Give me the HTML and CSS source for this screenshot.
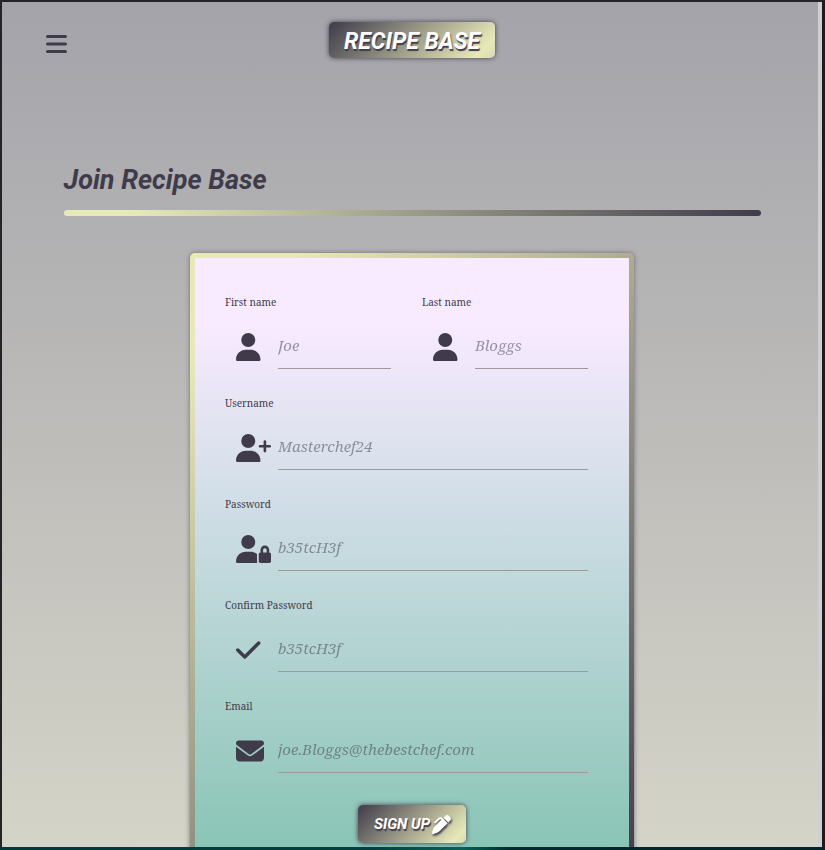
FILE: index.html
```html
<!DOCTYPE html>
<html lang="en">
<head>
<meta charset="utf-8">
<meta name="viewport" content="width=device-width, initial-scale=1">
<title>Join Recipe Base</title>
<link rel="stylesheet" href="styles.css">
</head>
<body>
<div class="page">
  <header class="navbar">
    <button class="menu" type="button" aria-label="Menu">
      <svg viewBox="0 0 448 512" width="21" height="24"><path d="M32 64H416a32 32 0 0 1 0 64H32a32 32 0 0 1 0-64zM32 224H416a32 32 0 0 1 0 64H32a32 32 0 0 1 0-64zM32 384H416a32 32 0 0 1 0 64H32a32 32 0 0 1 0-64z"/></svg>
    </button>
    <a class="plate logo" href="#">RECIPE BASE</a>
  </header>
  <main>
    <h1>Join Recipe Base</h1>
    <hr class="rule">
    <form class="card">
      <div class="fields">
        <div class="field">
          <label for="first">First name</label>
          <div class="entry">
            <svg viewBox="0 0 640 512" width="35" height="28"><path d="M224 256A128 128 0 1 0 224 0a128 128 0 1 0 0 256zm-45.7 48C79.8 304 0 383.8 0 482.3C0 498.7 13.3 512 29.7 512H418.3c16.4 0 29.7-13.3 29.7-29.7C448 383.8 368.2 304 269.7 304H178.3z"/></svg>
            <input id="first" type="text" placeholder="Joe">
          </div>
        </div>
        <div class="field">
          <label for="last">Last name</label>
          <div class="entry">
            <svg viewBox="0 0 640 512" width="35" height="28"><path d="M224 256A128 128 0 1 0 224 0a128 128 0 1 0 0 256zm-45.7 48C79.8 304 0 383.8 0 482.3C0 498.7 13.3 512 29.7 512H418.3c16.4 0 29.7-13.3 29.7-29.7C448 383.8 368.2 304 269.7 304H178.3z"/></svg>
            <input id="last" type="text" placeholder="Bloggs">
          </div>
        </div>
        <div class="field wide">
          <label for="username">Username</label>
          <div class="entry">
            <svg viewBox="0 0 640 512" width="35" height="28"><path d="M96 128a128 128 0 1 1 256 0A128 128 0 1 1 96 128zM0 482.3C0 383.8 79.8 304 178.3 304h91.4C368.2 304 448 383.8 448 482.3c0 16.4-13.3 29.7-29.7 29.7H29.7C13.3 512 0 498.7 0 482.3zM504 312V248H440c-13.3 0-24-10.7-24-24s10.7-24 24-24h64V136c0-13.3 10.7-24 24-24s24 10.7 24 24v64h64c13.3 0 24 10.7 24 24s-10.7 24-24 24H552v64c0 13.3-10.7 24-24 24s-24-10.7-24-24z"/></svg>
            <input id="username" type="text" placeholder="Masterchef24">
          </div>
        </div>
        <div class="field wide">
          <label for="password">Password</label>
          <div class="entry">
            <svg viewBox="0 0 640 512" width="35" height="28"><path d="M224 256A128 128 0 1 0 224 0a128 128 0 1 0 0 256zm-45.7 48C79.8 304 0 383.8 0 482.3C0 498.7 13.3 512 29.7 512H392.6c-5.4-9.4-8.6-20.3-8.6-32V352c0-2.1 .1-4.2 .3-6.3c-31-26-71-41.7-114.6-41.7H178.3zM528 240c17.7 0 32 14.3 32 32v48H496V272c0-17.7 14.3-32 32-32zm-80 32v48c-17.7 0-32 14.3-32 32V480c0 17.7 14.3 32 32 32H608c17.7 0 32-14.3 32-32V352c0-17.7-14.3-32-32-32V272c0-44.2-35.8-80-80-80s-80 35.8-80 80z"/></svg>
            <input id="password" type="password" placeholder="b35tcH3f">
          </div>
        </div>
        <div class="field wide">
          <label for="confirm">Confirm Password</label>
          <div class="entry">
            <svg viewBox="0 0 640 512" width="35" height="28"><path d="M438.6 105.4c12.5 12.5 12.5 32.8 0 45.3l-256 256c-12.5 12.5-32.8 12.5-45.3 0l-128-128c-12.5-12.5-12.5-32.8 0-45.3s32.8-12.5 45.3 0L160 338.7 393.4 105.4c12.5-12.5 32.8-12.5 45.3 0z"/></svg>
            <input id="confirm" type="password" placeholder="b35tcH3f">
          </div>
        </div>
        <div class="field wide">
          <label for="email">Email</label>
          <div class="entry">
            <svg viewBox="0 0 640 512" width="35" height="28"><path d="M48 64C21.5 64 0 85.5 0 112c0 15.1 7.1 29.3 19.2 38.4L236.8 313.6c11.4 8.5 27 8.5 38.4 0L492.8 150.4c12.1-9.1 19.2-23.3 19.2-38.4c0-26.5-21.5-48-48-48H48zM0 176V384c0 35.3 28.7 64 64 64H448c35.3 0 64-28.7 64-64V176L294.4 339.2c-22.8 17.1-54 17.1-76.8 0L0 176z"/></svg>
            <input id="email" type="email" placeholder="joe.Bloggs@thebestchef.com">
          </div>
        </div>
      </div>
      <button class="plate submit" type="submit">SIGN UP
        <svg viewBox="0 0 512 512" width="19" height="19"><path d="M453.3 19.3l39.4 39.4c25 25 25 65.5 0 90.5L440.6 201.3 310.7 71.4 362.8 19.3c25-25 65.5-25 90.5 0zM241 114.9c-9.4-9.4-24.6-9.4-33.9 0L105 217c-9.4 9.4-24.6 9.4-33.9 0s-9.4-24.6 0-33.9L173.1 81c28.1-28.1 73.7-28.1 101.8 0L288 94.1 418 224.1 229.500 412.500c-48 48-109.200 80.200-175.800 93.500L28.700 511c-7.900 1.600-16-.9-21.700-6.600s-8.100-13.800-6.600-21.700l4.900-25c13.300-66.600 45.800-127.800 93.800-175.800L254 127.900z"/></svg>
      </button>
    </form>
  </main>
</div>
</body>
</html>
```
FILE: styles.css
```css
* {
  box-sizing: border-box;
}

body {
  margin: 0;
  height: 100vh;
  display: flex;
  padding-bottom: 3px;
  overflow: hidden;
  background: linear-gradient(90deg, #01383b, #033f40 45%, #07605a 56%, #03292f 62%, #03242a);
  font-family: Roboto, sans-serif;
  color: #3f3b4b;
}

.page {
  flex: 1;
  overflow: hidden;
  border: 2px solid #252328;
  border-right: 3px solid #1c1c1e;
  border-bottom: 0;
  background:
    linear-gradient(#cfcfd1, #cfcfd3) right / 4px 100% no-repeat,
    linear-gradient(#a4a3aa, #d5d4c8);
}

svg {
  display: block;
  fill: currentColor;
}

.navbar {
  display: grid;
  grid-template-columns: 1fr auto 1fr;
  align-items: center;
  padding: 20px 44px 0;
}

.menu {
  justify-self: start;
  margin: 8px 0 0;
  padding: 0;
  border: 0;
  background: none;
  color: inherit;
}

.plate {
  border: 0;
  border-radius: 5px;
  background: linear-gradient(135deg, #3f3b4b, #e8e9b9 90%, #d8d9b0);
  box-shadow: 0 0 5px #3f3b4b;
  color: #fff;
  fill: #fff;
  font-family: Roboto, sans-serif;
  font-style: italic;
  font-weight: 700;
  text-decoration: none;
  text-shadow: 1px 2px 1px #3f3b4b;
}

.logo {
  grid-column: 2;
  padding: 3px 15px 0;
  font-size: 23px;
  line-height: 33px;
}

main {
  width: 85%;
  margin: 102px auto 0;
}

h1 {
  margin: 0;
  font-size: 27px;
  font-style: italic;
  font-weight: 700;
  line-height: 40px;
}

.rule {
  height: 6px;
  margin: 10px 0 0;
  border: 0;
  border-radius: 3px;
  background: linear-gradient(90deg, #e8e9b9 10%, #3f3b4b);
}

.card {
  max-width: 444px;
  margin: 37px auto 0;
  padding: 36px 30px 30px;
  border: 5px solid transparent;
  border-radius: 5px;
  background:
    linear-gradient(#f8eaff 11%, #d4dfe9 37%, #84c3b2) padding-box,
    linear-gradient(135deg, #e8e9b9 10%, #3f3b4b) border-box;
  box-shadow: 0 0 5px #6f6c75;
}

.fields {
  display: grid;
  grid-template-columns: 1fr 1fr;
  gap: 26px 31px;
  padding-right: 11px;
}

.field {
  display: grid;
  gap: 11px;
}

.wide {
  grid-column: 1 / -1;
}

label {
  font-family: "Noto Serif", "Liberation Serif", serif;
  font-size: 10px;
  line-height: 16px;
}

.entry {
  display: grid;
  grid-template-columns: 42px 1fr;
  align-items: center;
  padding-left: 11px;
}

.entry svg {
  margin-top: 4px;
}

input {
  width: 100%;
  min-width: 0;
  height: 48px;
  padding: 0;
  border: 0;
  border-bottom: 1px solid #9e9a9b;
  background: none;
  color: #3f3b4b;
  font-family: "Noto Serif", "Liberation Serif", serif;
  font-size: 15px;
  font-style: italic;
}

input::placeholder {
  color: #3f3b4b;
  opacity: 0.5;
}

.submit {
  display: flex;
  align-items: center;
  gap: 2px;
  margin: 32px auto 0;
  padding: 0 15px 0 16px;
  font-size: 15px;
  line-height: 38px;
}

.submit svg {
  filter: drop-shadow(1px 2px 1px #3f3b4b);
}
```
